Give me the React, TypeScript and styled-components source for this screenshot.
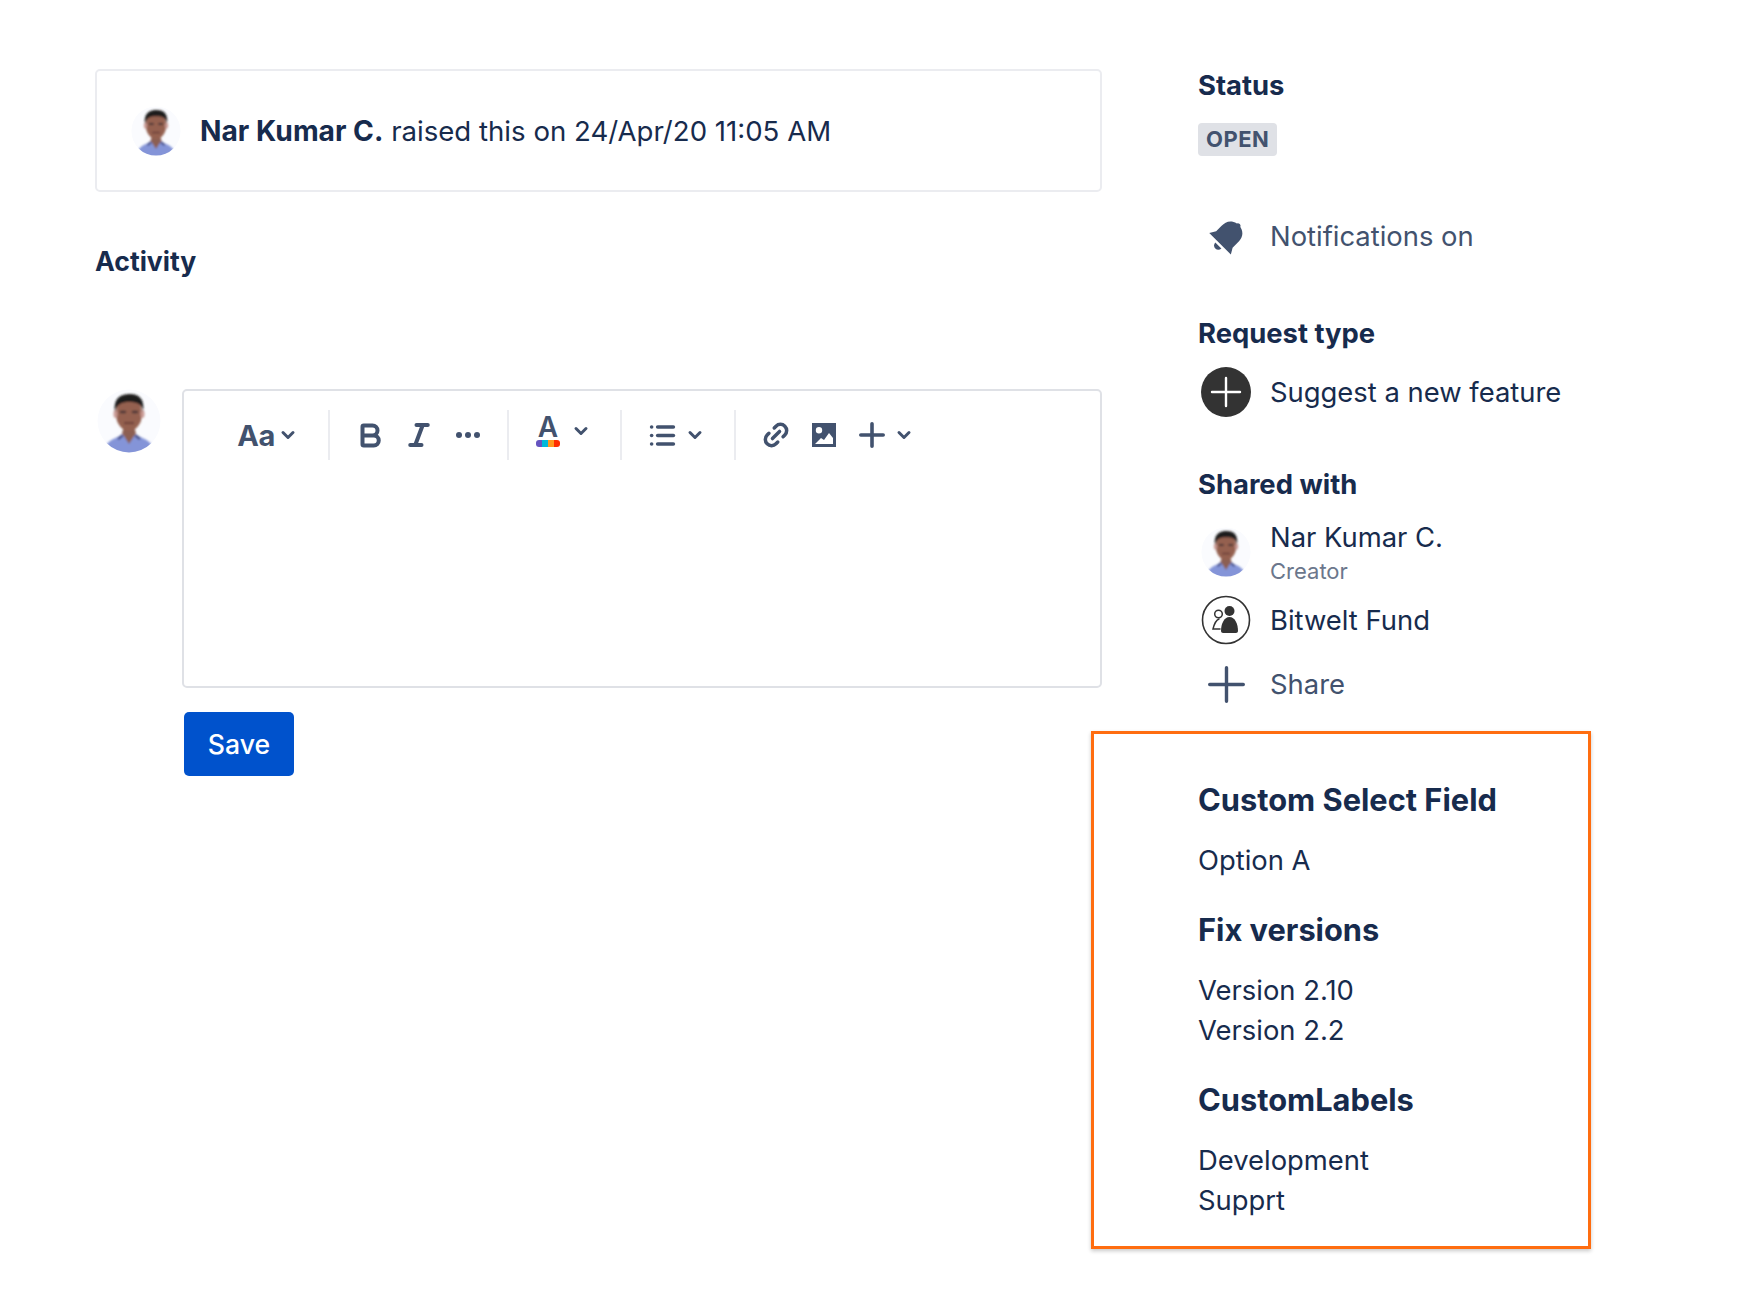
import React from "react";
import styled, { createGlobalStyle } from "styled-components";
import { Bold, Italic, ChevronDown, List, Link2 } from "lucide-react";

const Global = createGlobalStyle`
  html, body { margin: 0; padding: 0; background: #fff; }
  body { font-family: Inter, "Liberation Sans", sans-serif; color: #172b4d; }
`;

const Page = styled.div`
  width: 1758px;
  height: 1292px;
  display: flex;
  box-sizing: border-box;
  padding: 69px 0 0 95px;
  overflow: hidden;
`;
const Main = styled.main`
  width: 1007px;
  flex: none;
`;
const RaisedCard = styled.div`
  height: 123px;
  box-sizing: border-box;
  border: 2px solid #ebecf0;
  border-radius: 5px;
  display: flex;
  align-items: center;
  padding: 0 0 0 34px;
  gap: 19px;
  font-size: 27.6px;
  white-space: nowrap;
`;
const Strong = styled.strong`
  font-size: 28.200px;
  font-weight: 700;
`;
const ActivityTitle = styled.h2`
  margin: 52px 0 0;
  font-size: 26.600px;
  line-height: 34px;
  font-weight: 700;
`;
const EditorRow = styled.div`
  margin-top: 111px;
  display: flex;
  gap: 21px;
  padding-left: 2px;
`;
const EditorColumn = styled.div`
  flex: 1;
`;
const Editor = styled.div`
  height: 299px;
  box-sizing: border-box;
  border: 2px solid #dfe1e6;
  border-radius: 5px;
  padding: 19px 0 0 50px;
`;
const Toolbar = styled.div`
  display: flex;
  height: 50px;
  color: #42526e;
`;
const Group = styled.div<{ $gap: number; $left: number; $right: number; $last?: boolean }>`
  display: flex;
  align-items: center;
  gap: ${(p) => p.$gap}px;
  padding: 0 ${(p) => p.$right}px 0 ${(p) => p.$left}px;
  border-right: ${(p) => (p.$last ? "none" : "2px solid #ebecf0")};
`;
const Tool = styled.span<{ $w: number; $up?: number }>`
  width: ${(p) => p.$w}px;
  margin-top: ${(p) => -(p.$up ?? 0)}px;
  display: flex;
  justify-content: center;
  align-items: center;
`;
const ToolPair = styled.span`
  display: flex;
  align-items: center;
  gap: 7px;
`;
const AaLabel = styled.span`
  font-size: 29px;
  font-weight: 700;
  line-height: 1;
  letter-spacing: -0.5px;
`;
const ColorTool = styled.span`
  width: 28px;
  display: flex;
  flex-direction: column;
  align-items: center;
  margin-top: -9px;
`;
const ColorA = styled.span`
  font-size: 28px;
  font-weight: 600;
  line-height: 25px;
`;
const ColorBar = styled.span`
  width: 24px;
  height: 7px;
  border-radius: 3px;
  background: linear-gradient(90deg, #6554c0 25%, #00b8d9 25% 50%, #ff991f 50% 75%, #ff2d00 75%);
`;
const Save = styled.button`
  margin: 24px 0 0 2px;
  display: block;
  width: 110px;
  height: 64px;
  border: 0;
  border-radius: 5px;
  background: #0052cc;
  color: #fff;
  font: 500 26.600px Inter, "Liberation Sans", sans-serif;
`;

const Side = styled.aside`
  margin-left: 96px;
  width: 400px;
  flex: none;
`;
const Label = styled.h3<{ $top?: number }>`
  margin: ${(p) => p.$top ?? 0}px 0 0;
  font-size: 27.400px;
  line-height: 34px;
  font-weight: 700;
`;
const Tag = styled.span`
  display: inline-block;
  margin-top: 21px;
  padding: 0 8px;
  height: 33px;
  line-height: 33px;
  background: #dfe1e6;
  border-radius: 4px;
  color: #42526e;
  font-size: 22px;
  font-weight: 700;
  letter-spacing: 0.5px;
`;
const Row = styled.div<{ $top: number; $muted?: boolean }>`
  margin-top: ${(p) => p.$top}px;
  display: flex;
  align-items: center;
  height: 50px;
  font-size: 27.400px;
  color: ${(p) => (p.$muted ? "#42526e" : "#172b4d")};
`;
const IconSlot = styled.span`
  width: 56px;
  margin-right: 16px;
  display: flex;
  justify-content: center;
  color: #42526e;
`;
const Stack = styled.div`
  display: flex;
  flex-direction: column;
`;
const Role = styled.span`
  font-size: 22px;
  line-height: 30px;
  color: #6b778c;
`;
const Name = styled.span`
  line-height: 38px;
`;
const Highlight = styled.section`
  margin: 22px 0 0 -107px;
  width: 500px;
  height: 518px;
  box-sizing: border-box;
  border: 3px solid #ff6d10;
  box-shadow: 0 2px 4px rgba(0, 0, 0, 0.22);
  padding: 45px 0 0 104px;
`;
const FieldTitle = styled.h4<{ $top?: number }>`
  margin: ${(p) => p.$top ?? 0}px 0 0;
  font-size: 30.800px;
  line-height: 42px;
  font-weight: 700;
`;
const Values = styled.div`
  margin-top: 19px;
  font-size: 27.400px;
  line-height: 40px;
`;

function Portrait({ size }: { size: number }) {
  const id = `blur${size}`;
  return (
    <svg width={size} height={size} viewBox="0 0 64 64" style={{ flex: "none" }}>
      <defs>
        <filter id={id} x="-10%" y="-10%" width="120%" height="120%">
          <feGaussianBlur stdDeviation="1.1" />
        </filter>
        <clipPath id={`${id}c`}>
          <circle cx="32" cy="32" r="31.5" />
        </clipPath>
      </defs>
      <g clipPath={`url(#${id}c)`}>
        <circle cx="32" cy="32" r="32" fill="#fafbfe" />
        <g filter={`url(#${id})`}>
          <path d="M4 72 C6 54 14 50 24 47 L40 47 C50 50 58 54 60 72Z" fill="#8494d8" />
          <path d="M25 44 L32 55 L39 44 L37 38 L27 38Z" fill="#8c5f52" />
          <path d="M26 46 L21 50 M38 46 L43 50" stroke="#46508a" strokeWidth="2.8" />
          <ellipse cx="32" cy="25" rx="13" ry="17" fill="#94604f" />
          <ellipse cx="18.500" cy="25" rx="2" ry="4" fill="#c99a94" />
          <ellipse cx="45.500" cy="25" rx="2" ry="4" fill="#c99a94" />
          <path d="M18 23 C16 8 25 5 33 5 C42 5 48 10 46 23 C45 15 40 13 32 13 C25 13 20 15 18 23Z" fill="#1d1b1c" />
          <path d="M23 23 H29 M35 23 H41" stroke="#4a3535" strokeWidth="2.600" />
          <path d="M27 34 H37" stroke="#70423a" strokeWidth="2.200" />
        </g>
      </g>
    </svg>
  );
}

function BellIcon() {
  return (
    <svg width="44" height="44" viewBox="-1.500 0 36 36" fill="#42526e">
      <g transform="rotate(45 18 18)">
        <path d="M16 5.500a2.200 2.200 0 0 1 4 0C26 7 27.500 11 27.500 16v6l3 5H5.500l3-5v-6C8.500 11 10 7 16 5.500z" />
        <path d="M14.500 29h7a3.500 3.500 0 0 1-7 0z" />
      </g>
    </svg>
  );
}
function PlusCircle() {
  return (
    <svg width="50" height="50" viewBox="0 0 50 50">
      <circle cx="25" cy="25" r="25" fill="#333" />
      <path d="M25 11v28M11 25h28" stroke="#fff" strokeWidth="2.400" strokeLinecap="round" />
    </svg>
  );
}
function GroupCircle() {
  return (
    <svg width="50" height="50" viewBox="0 0 50 50">
      <circle cx="25" cy="25" r="23.500" fill="#fff" stroke="#333" strokeWidth="1.600" />
      <circle cx="28.500" cy="16" r="5" fill="#333" />
      <path d="M20 36c0-7 3-14 8.500-14S37 29 37 36c0 1.300-1 2-2 2H22c-1 0-2-.7-2-2z" fill="#333" />
      <circle cx="17.500" cy="19" r="3.800" fill="none" stroke="#333" strokeWidth="1.500" />
      <path d="M18 24c-3 1-5 6-6 10h7" fill="none" stroke="#333" strokeWidth="1.500" strokeLinecap="round" />
    </svg>
  );
}
function ImageIcon() {
  return (
    <svg width="26" height="26" viewBox="0 0 26 26" fill="#42526e">
      <path fillRule="evenodd" d="M1 1h24v24H1zM8 5a3.200 3.200 0 1 0 0 6.400A3.200 3.200 0 0 0 8 5zM4 22h18v-6l-4-5-5 7-3-2z" />
    </svg>
  );
}
function DotsIcon() {
  return (
    <svg width="26" height="8" viewBox="0 0 26 8" fill="#42526e">
      <circle cx="4" cy="4" r="3" />
      <circle cx="13" cy="4" r="3" />
      <circle cx="22" cy="4" r="3" />
    </svg>
  );
}
function PlusGlyph({ size, stroke }: { size: number; stroke: number }) {
  const end = size - stroke / 2;
  const mid = size / 2;
  return (
    <svg width={size} height={size} viewBox={`0 0 ${size} ${size}`}>
      <path
        d={`M${mid} ${stroke / 2}V${end}M${stroke / 2} ${mid}H${end}`}
        stroke="#42526e"
        strokeWidth={stroke}
        strokeLinecap="round"
        fill="none"
      />
    </svg>
  );
}
const Chevron = () => <ChevronDown size={26} strokeWidth={3.600} />;

export default function App() {
  return (
    <>
      <Global />
      <Page>
        <Main>
          <RaisedCard>
            <Portrait size={50} />
            <span>
              <Strong>Nar Kumar C.</Strong> raised this on 24/Apr/20 11:05 AM
            </span>
          </RaisedCard>
          <ActivityTitle>Activity</ActivityTitle>
          <EditorRow>
            <Portrait size={64} />
            <EditorColumn>
              <Editor>
                <Toolbar>
                  <Group $gap={0} $left={0} $right={30}>
                    <Tool $w={44}><AaLabel>Aa</AaLabel></Tool>
                    <Tool $w={20}><Chevron /></Tool>
                  </Group>
                  <Group $gap={19} $left={25} $right={24}>
                    <Tool $w={30}><Bold size={31} strokeWidth={3.200} /></Tool>
                    <Tool $w={30}><Italic size={30} strokeWidth={3.200} /></Tool>
                    <Tool $w={30}><DotsIcon /></Tool>
                  </Group>
                  <Group $gap={9} $left={25} $right={29}>
                    <ColorTool><ColorA>A</ColorA><ColorBar /></ColorTool>
                    <Tool $w={20} $up={9}><Chevron /></Tool>
                  </Group>
                  <Group $gap={8} $left={25} $right={29}>
                    <Tool $w={30}><List size={29} strokeWidth={3} /></Tool>
                    <Tool $w={20}><Chevron /></Tool>
                  </Group>
                  <Group $gap={18} $left={25} $right={0} $last>
                    <Tool $w={30}><Link2 size={32} strokeWidth={2.800} transform="rotate(-45)" /></Tool>
                    <Tool $w={30}><ImageIcon /></Tool>
                    <ToolPair>
                      <Tool $w={30}><PlusGlyph size={26} stroke={3.600} /></Tool>
                      <Tool $w={20}><Chevron /></Tool>
                    </ToolPair>
                  </Group>
                </Toolbar>
              </Editor>
              <Save>Save</Save>
            </EditorColumn>
          </EditorRow>
        </Main>
        <Side>
          <Label $top={-1}>Status</Label>
          <Tag>OPEN</Tag>
          <Row $top={55} $muted>
            <IconSlot><BellIcon /></IconSlot>
            Notifications on
          </Row>
          <Label $top={55}>Request type</Label>
          <Row $top={17}>
            <IconSlot><PlusCircle /></IconSlot>
            Suggest a new feature
          </Row>
          <Label $top={50}>Shared with</Label>
          <Row $top={26}>
            <IconSlot><Portrait size={50} /></IconSlot>
            <Stack>
              <Name>Nar Kumar C.</Name>
              <Role>Creator</Role>
            </Stack>
          </Row>
          <Row $top={18}>
            <IconSlot><GroupCircle /></IconSlot>
            Bitwelt Fund
          </Row>
          <Row $top={14} $muted>
            <IconSlot><PlusGlyph size={37} stroke={3.400} /></IconSlot>
            Share
          </Row>
          <Highlight>
            <FieldTitle>Custom Select Field</FieldTitle>
            <Values><div>Option A</div></Values>
            <FieldTitle $top={29}>Fix versions</FieldTitle>
            <Values><div>Version 2.10</div><div>Version 2.2</div></Values>
            <FieldTitle $top={29}>CustomLabels</FieldTitle>
            <Values><div>Development</div><div>Supprt</div></Values>
          </Highlight>
        </Side>
      </Page>
    </>
  );
}
